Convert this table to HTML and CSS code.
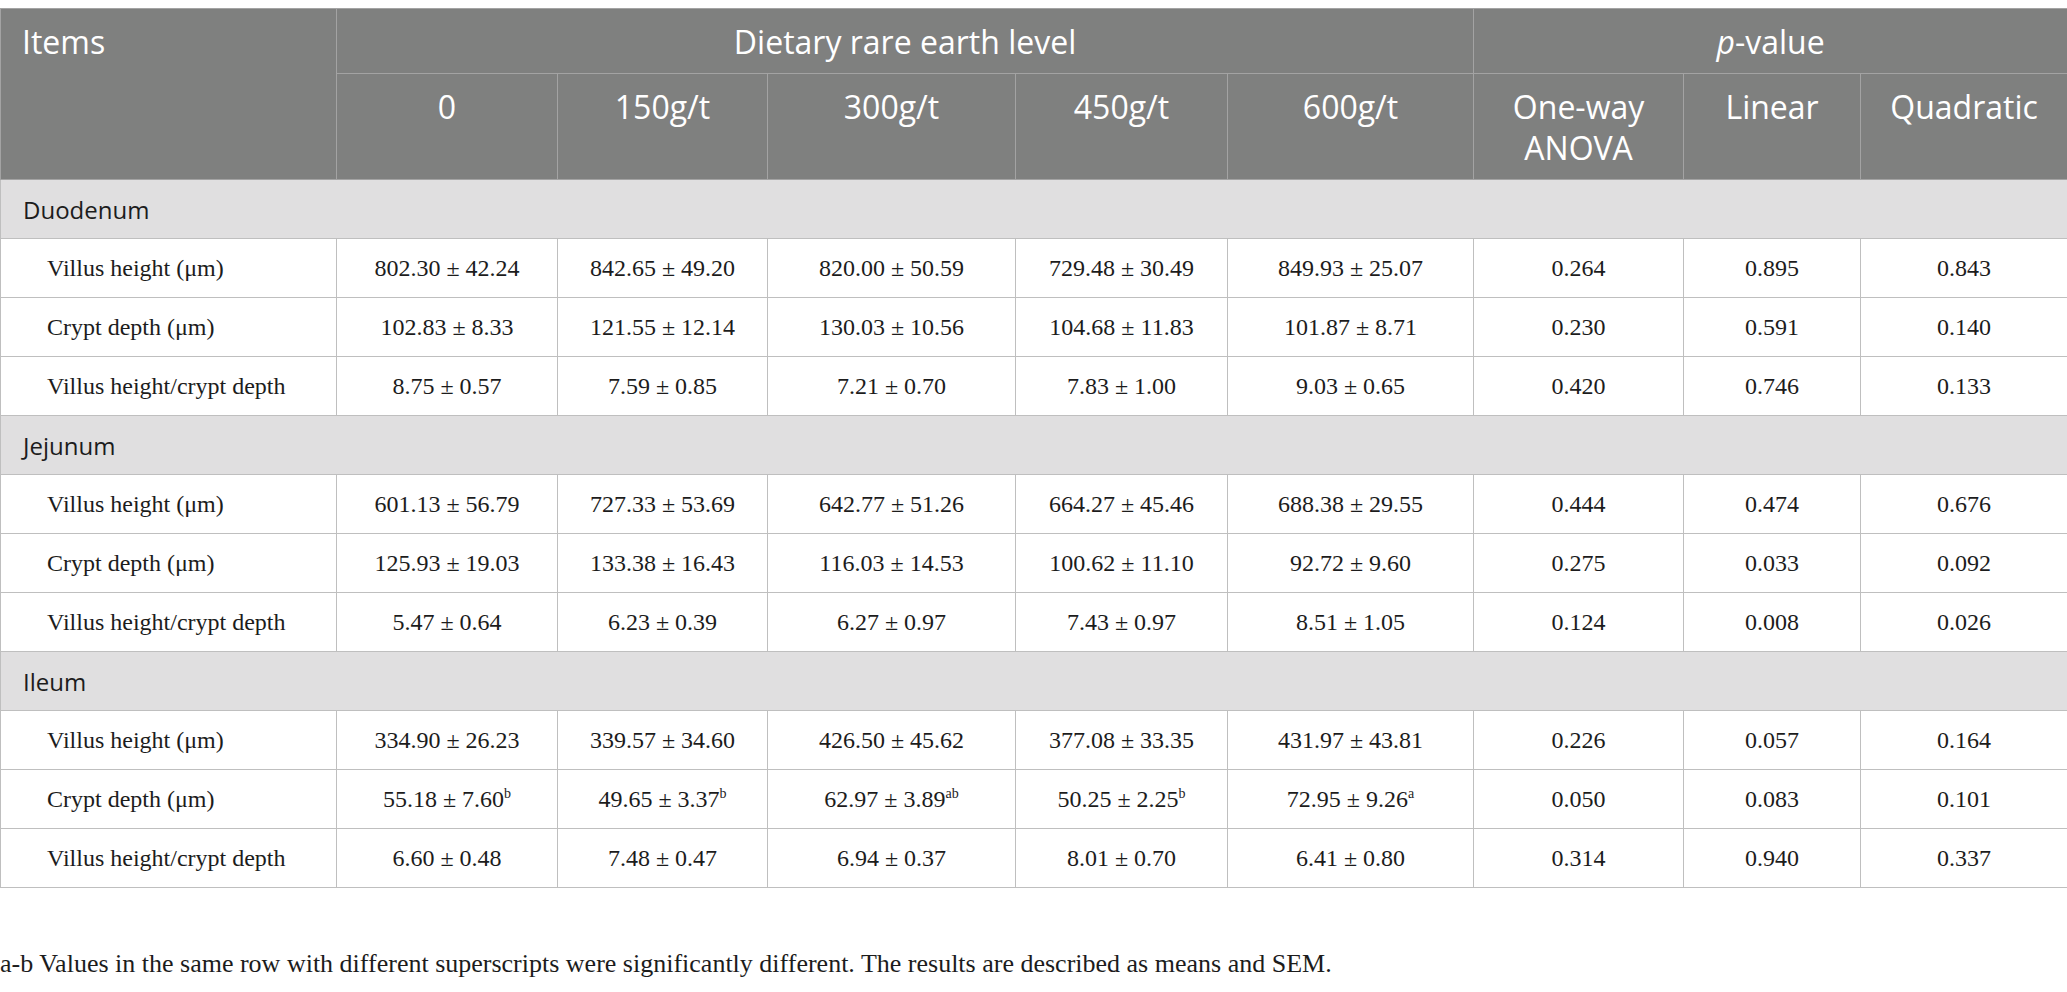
FILE: index.html
```html
<!DOCTYPE html>
<html lang="en">
<head>
    <meta charset="UTF-8">
    <title>Intestinal morphology</title>
    <link rel="stylesheet" href="styles.css">
</head>
<body>
    <table class="data-table">
        <colgroup>
            <col class="c-items">
            <col class="c-0">
            <col class="c-150">
            <col class="c-300">
            <col class="c-450">
            <col class="c-600">
            <col class="c-anova">
            <col class="c-linear">
            <col class="c-quad">
        </colgroup>
        <thead>
            <tr>
                <th rowspan="2" class="left">Items</th>
                <th colspan="5">Dietary rare earth level</th>
                <th colspan="3"><i>p</i>-value</th>
            </tr>
            <tr>
                <th>0</th>
                <th>150g/t</th>
                <th>300g/t</th>
                <th>450g/t</th>
                <th>600g/t</th>
                <th>One-way<br>ANOVA</th>
                <th>Linear</th>
                <th>Quadratic</th>
            </tr>
        </thead>
        <tbody>
            <tr class="section"><td colspan="9">Duodenum</td></tr>
            <tr>
                <td class="item">Villus height (μm)</td>
                <td>802.30 ± 42.24</td>
                <td>842.65 ± 49.20</td>
                <td>820.00 ± 50.59</td>
                <td>729.48 ± 30.49</td>
                <td>849.93 ± 25.07</td>
                <td>0.264</td>
                <td>0.895</td>
                <td>0.843</td>
            </tr>
            <tr>
                <td class="item">Crypt depth (μm)</td>
                <td>102.83 ± 8.33</td>
                <td>121.55 ± 12.14</td>
                <td>130.03 ± 10.56</td>
                <td>104.68 ± 11.83</td>
                <td>101.87 ± 8.71</td>
                <td>0.230</td>
                <td>0.591</td>
                <td>0.140</td>
            </tr>
            <tr>
                <td class="item">Villus height/crypt depth</td>
                <td>8.75 ± 0.57</td>
                <td>7.59 ± 0.85</td>
                <td>7.21 ± 0.70</td>
                <td>7.83 ± 1.00</td>
                <td>9.03 ± 0.65</td>
                <td>0.420</td>
                <td>0.746</td>
                <td>0.133</td>
            </tr>

            <tr class="section"><td colspan="9">Jejunum</td></tr>
            <tr>
                <td class="item">Villus height (μm)</td>
                <td>601.13 ± 56.79</td>
                <td>727.33 ± 53.69</td>
                <td>642.77 ± 51.26</td>
                <td>664.27 ± 45.46</td>
                <td>688.38 ± 29.55</td>
                <td>0.444</td>
                <td>0.474</td>
                <td>0.676</td>
            </tr>
            <tr>
                <td class="item">Crypt depth (μm)</td>
                <td>125.93 ± 19.03</td>
                <td>133.38 ± 16.43</td>
                <td>116.03 ± 14.53</td>
                <td>100.62 ± 11.10</td>
                <td>92.72 ± 9.60</td>
                <td>0.275</td>
                <td>0.033</td>
                <td>0.092</td>
            </tr>
            <tr>
                <td class="item">Villus height/crypt depth</td>
                <td>5.47 ± 0.64</td>
                <td>6.23 ± 0.39</td>
                <td>6.27 ± 0.97</td>
                <td>7.43 ± 0.97</td>
                <td>8.51 ± 1.05</td>
                <td>0.124</td>
                <td>0.008</td>
                <td>0.026</td>
            </tr>

            <tr class="section"><td colspan="9">Ileum</td></tr>
            <tr>
                <td class="item">Villus height (μm)</td>
                <td>334.90 ± 26.23</td>
                <td>339.57 ± 34.60</td>
                <td>426.50 ± 45.62</td>
                <td>377.08 ± 33.35</td>
                <td>431.97 ± 43.81</td>
                <td>0.226</td>
                <td>0.057</td>
                <td>0.164</td>
            </tr>
            <tr>
                <td class="item">Crypt depth (μm)</td>
                <td>55.18 ± 7.60<sup>b</sup></td>
                <td>49.65 ± 3.37<sup>b</sup></td>
                <td>62.97 ± 3.89<sup>ab</sup></td>
                <td>50.25 ± 2.25<sup>b</sup></td>
                <td>72.95 ± 9.26<sup>a</sup></td>
                <td>0.050</td>
                <td>0.083</td>
                <td>0.101</td>
            </tr>
            <tr>
                <td class="item">Villus height/crypt depth</td>
                <td>6.60 ± 0.48</td>
                <td>7.48 ± 0.47</td>
                <td>6.94 ± 0.37</td>
                <td>8.01 ± 0.70</td>
                <td>6.41 ± 0.80</td>
                <td>0.314</td>
                <td>0.940</td>
                <td>0.337</td>
            </tr>
        </tbody>
    </table>
    <p class="footnote">a-b Values in the same row with different superscripts were significantly different. The results are described as means and SEM.</p>
</body>
</html>
```

FILE: styles.css
```css
:root {
    --head-bg: #7f807f;
    --head-line: #a3a3a3;
    --section-bg: #e0dfe0;
    --line: #bfbfbf;
    --text: #1c1c1c;
}

* {
    box-sizing: border-box;
}

body {
    margin: 0;
    background: #ffffff;
    color: var(--text);
    font-family: 'Liberation Serif', 'Times New Roman', serif;
}

.data-table {
    width: 100%;
    margin-top: 8px;
    border-collapse: collapse;
    table-layout: fixed;
}

.c-items { width: 336px; }
.c-0 { width: 221px; }
.c-150 { width: 210px; }
.c-300 { width: 248px; }
.c-450 { width: 212px; }
.c-600 { width: 246px; }
.c-anova { width: 210px; }
.c-linear { width: 177px; }
.c-quad { width: 207px; }

th {
    background: var(--head-bg);
    color: #ffffff;
    border: 1px solid var(--head-line);
    font-family: 'Open Sans', 'Liberation Sans', sans-serif;
    font-weight: 400;
    font-size: 32px;
    line-height: 41px;
    text-align: center;
    vertical-align: top;
    padding: 12px 10px 11px;
}

th.left {
    text-align: left;
    padding-left: 21px;
}

td {
    border: 1px solid var(--line);
    height: 59px;
    padding: 0 10px;
    font-size: 24px;
    text-align: center;
    vertical-align: middle;
}

td.item {
    text-align: left;
    padding-left: 46px;
}

.section td {
    background: var(--section-bg);
    text-align: left;
    padding-left: 22px;
    font-family: 'Open Sans', 'Liberation Sans', sans-serif;
    font-size: 24px;
}

sup {
    font-size: 14px;
    line-height: 0;
    vertical-align: 9px;
}

.footnote {
    margin: 60px 0 0;
    font-size: 26px;
    line-height: 32px;
}
```
